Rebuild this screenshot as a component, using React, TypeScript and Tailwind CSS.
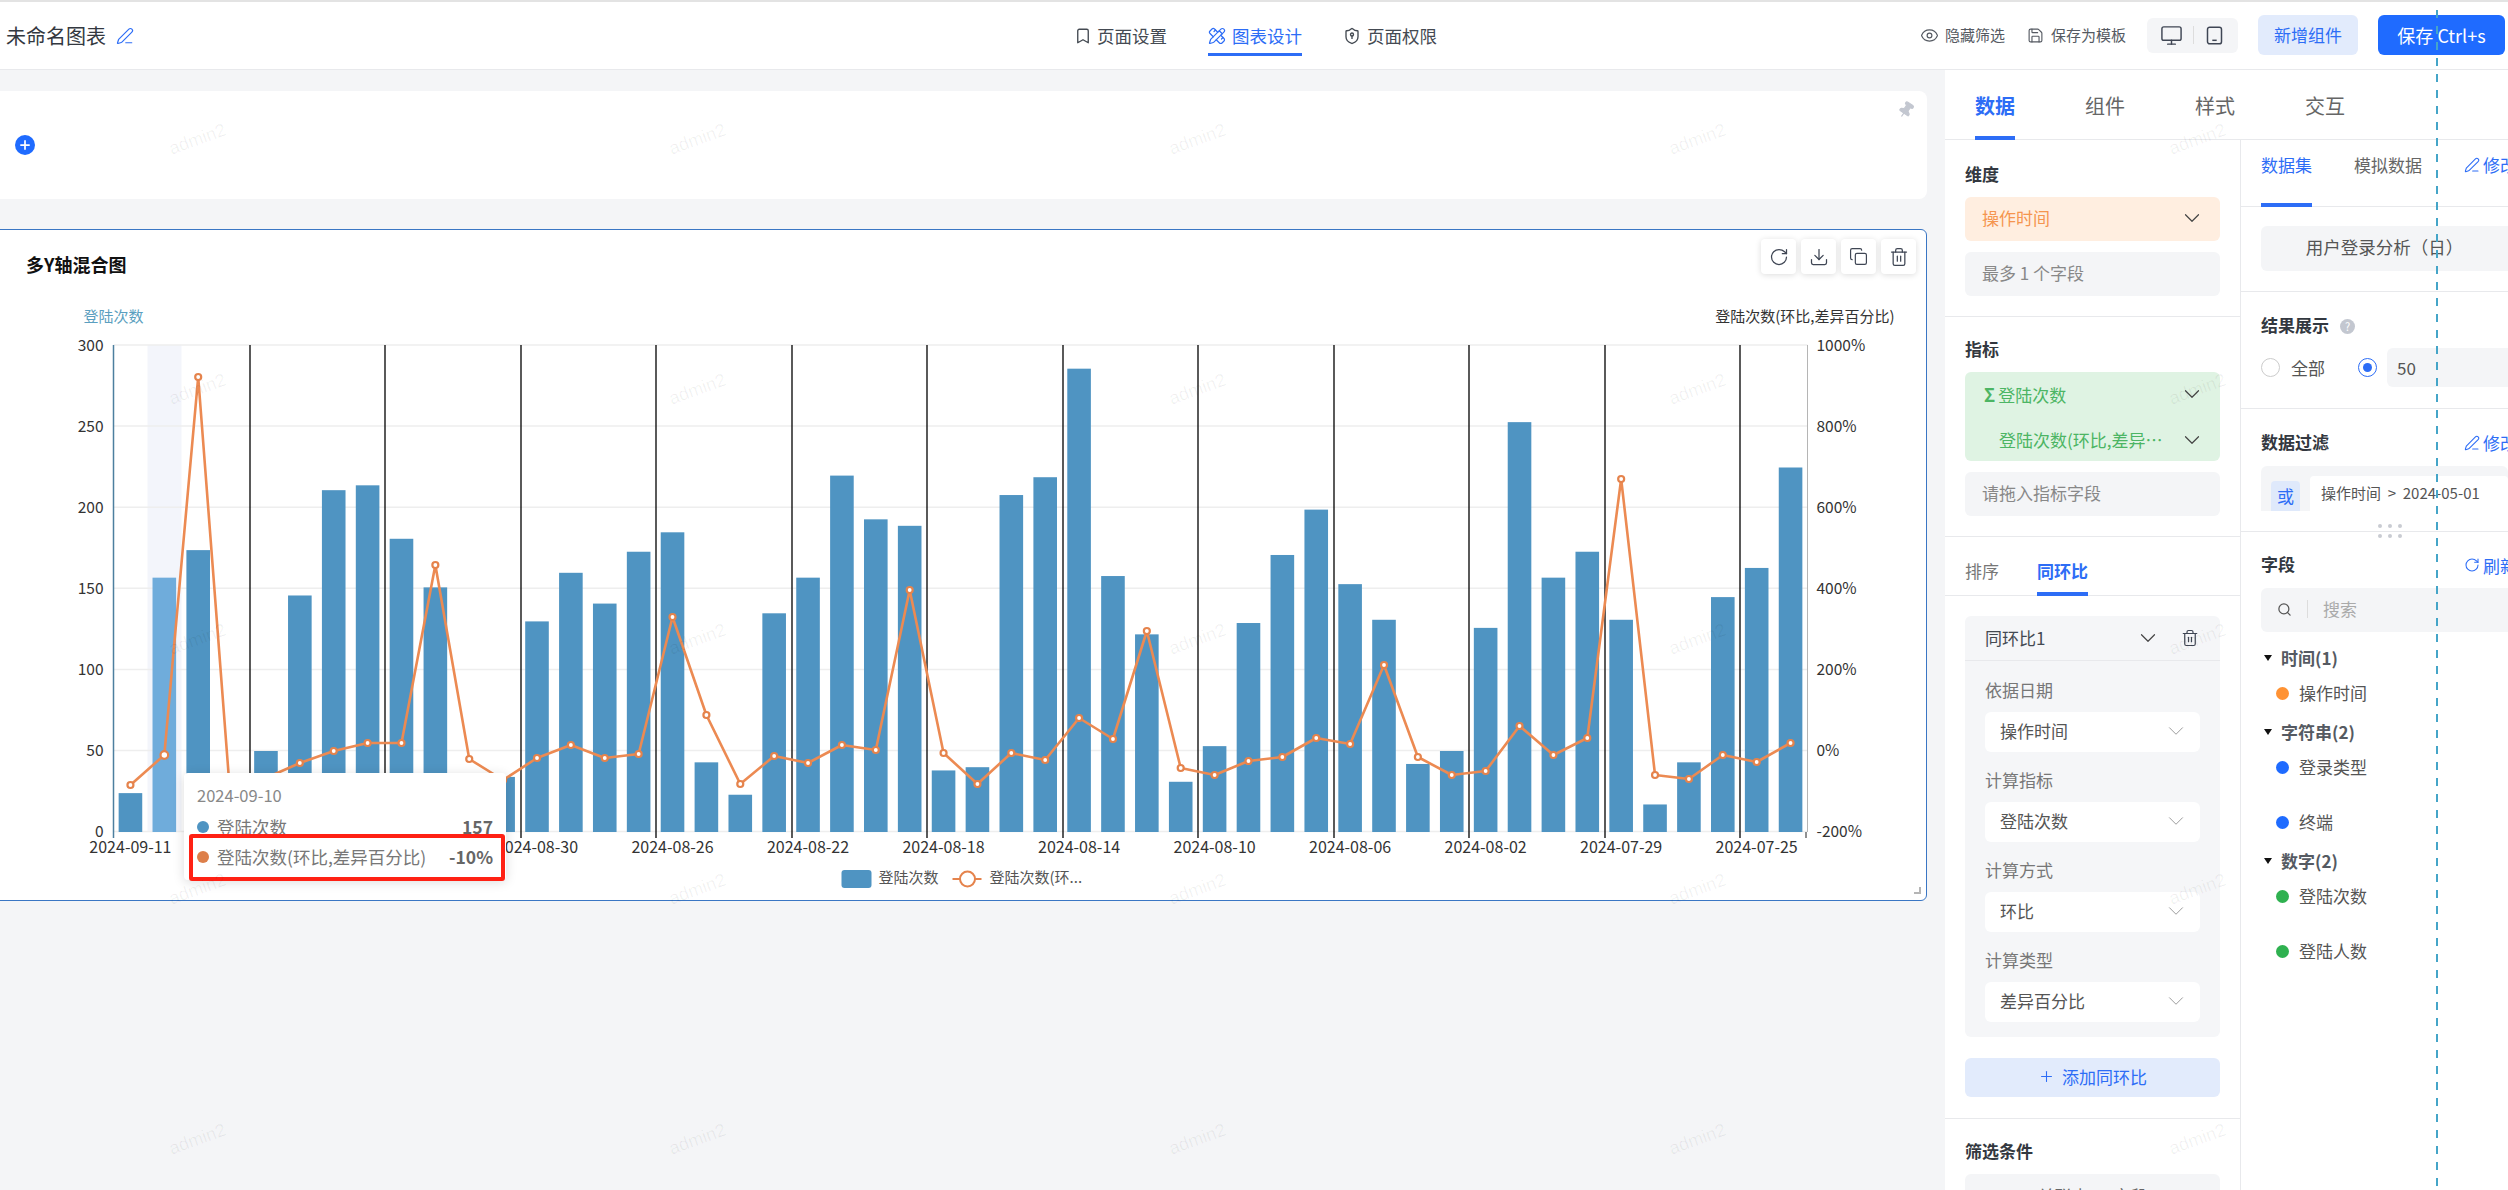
import {
  ChevronDown,
  Copy,
  Download,
  Eye,
  Monitor,
  PencilRuler,
  PenLine,
  Pin,
  Plus,
  RotateCw,
  Save,
  Search,
  Bookmark,
  Trash2,
} from "lucide-react";
import type { ReactNode } from "react";

const BARS = [
  24, 157, 174, 20, 50, 146, 211, 214, 181, 151, 30, 34, 130, 160, 141, 173, 185, 43, 23, 135, 157, 220, 193, 189, 38,
  40, 208, 219, 286, 158, 122, 31, 53, 129, 171, 199, 153, 131, 42, 50, 126, 253, 157, 173, 131, 17, 43, 145, 163, 225,
];
// y of each point of the line, page pixels
const LINE = [
  785, 755, 377, 820, 778, 763, 751, 743, 743, 565, 759, 780, 758, 745, 758, 754, 617, 715, 784, 756, 763, 745, 750,
  590, 753, 784, 753, 760, 718, 739, 631, 768, 775, 761, 757, 738, 744, 665, 757, 775, 771, 726, 755, 738, 479, 775,
  779, 755, 762, 743,
];
// the tooltip hides the two labels after the first one
const DATES = [
  { i: 0, d: "2024-09-11" },
  { i: 12, d: "2024-08-30" },
  { i: 16, d: "2024-08-26" },
  { i: 20, d: "2024-08-22" },
  { i: 24, d: "2024-08-18" },
  { i: 28, d: "2024-08-14" },
  { i: 32, d: "2024-08-10" },
  { i: 36, d: "2024-08-06" },
  { i: 40, d: "2024-08-02" },
  { i: 44, d: "2024-07-29" },
  { i: 48, d: "2024-07-25" },
];
const LEFT_X = 114;
const RIGHT_X = 1808;
const PITCH = (RIGHT_X - LEFT_X) / 50;
const TOP_Y = 345;
const BASE_Y = 832;
const cx = (i: number) => LEFT_X + PITCH * (i + 0.5);

function Chart() {
  const grid = [0, 1, 2, 3, 4, 5, 6];
  const ticks = [1, 2, 3, 4, 5, 6, 7, 8, 9, 10, 11, 12];
  return (
    <svg width={1933} height={600} viewBox="-6.5 300 1933 600" className="block">
      <rect x={148} y={TOP_Y} width={34} height={BASE_Y - TOP_Y} fill="#f3f5fb" />
      {grid.map((g) => (
        <line
          key={g}
          x1={LEFT_X}
          x2={RIGHT_X}
          y1={TOP_Y + g * 81.1}
          y2={TOP_Y + g * 81.1}
          stroke="#eeeeee"
          strokeWidth={1.5}
        />
      ))}
      {ticks.map((t) => (
        <line
          key={t}
          x1={Math.round(LEFT_X + PITCH * 4 * t) + 0.5}
          x2={Math.round(LEFT_X + PITCH * 4 * t) + 0.5}
          y1={TOP_Y}
          y2={BASE_Y + 6}
          stroke="#000000"
          strokeWidth={1.3}
        />
      ))}
      <line x1={LEFT_X} x2={LEFT_X} y1={TOP_Y} y2={BASE_Y + 6} stroke="#4d7f9f" strokeWidth={1.5} />
      <line x1={RIGHT_X} x2={RIGHT_X} y1={TOP_Y} y2={BASE_Y} stroke="#b5b5b5" />
      <line x1={1806.5} x2={1806.5} y1={BASE_Y} y2={BASE_Y + 6} stroke="#222222" />
      {BARS.map((v, i) => (
        <rect
          key={i}
          x={cx(i) - 11.8}
          y={BASE_Y - v * 1.62}
          width={23.6}
          height={v * 1.62}
          fill={i === 1 ? "#6facdb" : "#4f94c2"}
        />
      ))}
      <polyline
        points={LINE.map((y, i) => `${cx(i)},${y}`).join(" ")}
        fill="none"
        stroke="#ec8a52"
        strokeWidth={2.6}
        strokeLinejoin="round"
      />
      {LINE.map((y, i) => (
        <circle key={i} cx={cx(i)} cy={y} r={i === 1 ? 3.8 : 3} fill="#ffffff" stroke="#e5834c" strokeWidth={2.2} />
      ))}
      <g fontSize={15.5} fill="#333333">
        {["300", "250", "200", "150", "100", "50", "0"].map((t, i) => (
          <text key={t} x={104} y={TOP_Y + i * 81.1 + 5.5} textAnchor="end">
            {t}
          </text>
        ))}
        {["1000%", "800%", "600%", "400%", "200%", "0%", "-200%"].map((t, i) => (
          <text key={t} x={1817} y={TOP_Y + i * 81.1 + 5.5}>
            {t}
          </text>
        ))}
        {DATES.map(({ i, d }) => (
          <text key={d} x={cx(i)} y={853} textAnchor="middle" fontSize={16}>
            {d}
          </text>
        ))}
        <text x={84} y={322} fontSize={15} fill="#5b9fc0">
          登陆次数
        </text>
        <text x={1895} y={322} fontSize={15} textAnchor="end">
          登陆次数(环比,差异百分比)
        </text>
        <rect x={842} y={870} width={30} height={18} rx={3} fill="#4f94c2" />
        <text x={879} y={883} fontSize={15} fill="#555555">
          登陆次数
        </text>
        <line x1={953} x2={982} y1={879} y2={879} stroke="#e5834c" strokeWidth={2} />
        <circle cx={968} cy={879} r={7.5} fill="#ffffff" stroke="#e5834c" strokeWidth={2} />
        <text x={990} y={883} fontSize={15} fill="#555555">
          登陆次数(环...
        </text>
      </g>
    </svg>
  );
}

function Tooltip() {
  return (
    <div className="absolute left-[191px] top-[543px] h-[107px] w-[322px] rounded bg-white px-[13px] pt-[10px] shadow-[0_2px_12px_rgba(0,0,0,0.14)]">
      <div className="text-[16.5px] leading-[24px] text-[#888888]">2024-09-10</div>
      <div className="mt-[8px] flex h-[24px] items-center text-[17.5px] text-[#777777]">
        <span className="mr-[8px] size-[12px] rounded-full bg-[#4f94c2]" />
        登陆次数
        <span className="ml-auto font-bold text-[#666666]">157</span>
      </div>
      <div className="mt-[6px] flex h-[24px] items-center text-[17.5px] text-[#777777]">
        <span className="mr-[8px] size-[12px] rounded-full bg-[#dd7f4a]" />
        登陆次数(环比,差异百分比)
        <span className="ml-auto font-bold text-[#666666]">-10%</span>
      </div>
      <div className="absolute left-[5px] top-[61px] h-[47px] w-[316px] rounded-[3px] border-[4.5px] border-[#ff2114]" />
    </div>
  );
}

function ToolButton({ children }: { children: ReactNode }) {
  return (
    <div className="flex h-[35px] w-[35px] items-center justify-center rounded bg-white text-[#3f4654] shadow-[0_1px_6px_rgba(0,0,0,0.14)]">
      {children}
    </div>
  );
}

function SectionTitle({ children }: { children: ReactNode }) {
  return <div className="h-[24px] text-[17px] font-bold leading-[22px] text-[#333840]">{children}</div>;
}

function Field({ children }: { children: ReactNode }) {
  return (
    <div className="mt-[11px] flex h-[44px] items-center rounded-md bg-[#f4f5f7] px-[17px] pb-[2px] text-[17px] text-[#888888]">
      {children}
    </div>
  );
}

function SelectRow({ label, value, first }: { label: string; value: string; first?: boolean }) {
  return (
    <>
      <div className={`${first ? "mt-[18px]" : "mt-[17px]"} h-[24px] text-[17px] leading-[22px] text-[#777777]`}>{label}</div>
      <div className="mt-[9px] flex h-[40px] items-center justify-between rounded-md bg-white pb-[2px] pl-[15px] pr-[11px] text-[17px] text-[#555555]">
        {value}
        <ChevronDown size={26} strokeWidth={0.9} className="text-[#999999]" />
      </div>
    </>
  );
}

function TreeGroup({ label }: { label: string }) {
  return (
    <div className="mt-[15px] flex h-[24px] items-center pb-[2px] text-[17px] font-bold text-[#555a62]">
      <svg width="8" height="6" viewBox="0 0 8 6" className="ml-[3px] mr-[9px]">
        <path d="M0 0h8L4 6z" fill="#111111" />
      </svg>
      {label}
    </div>
  );
}

function TreeItem({ label, dot, far }: { label: string; dot: string; far?: boolean }) {
  return (
    <div className={`${far ? "mt-[31px]" : "mt-[11px]"} flex h-[24px] items-center pb-[2px] pl-[15px] text-[17px] text-[#555555]`}>
      <span className={`mr-[10px] size-[13px] rounded-full ${dot}`} />
      {label}
    </div>
  );
}

function EditLink({ label, Icon }: { label: string; Icon: typeof PenLine }) {
  return (
    <div className="flex w-[44px] shrink-0 items-center whitespace-nowrap text-[17px] text-[#2d6df6]">
      <Icon size={16} strokeWidth={1.6} className="mr-[3px] shrink-0" />
      {label}
    </div>
  );
}

function Watermarks() {
  const cells = Array.from({ length: 25 }, (_, i) => i);
  return (
    <div className="pointer-events-none absolute left-[-52px] top-[14px] grid auto-rows-[250px] grid-cols-[repeat(5,500px)] place-items-center">
      {cells.map((i) => (
        <span key={i} className="-rotate-20 font-['Liberation_Sans',sans-serif] text-[18px] text-[rgba(0,0,0,0.06)]">
          admin2
        </span>
      ))}
    </div>
  );
}

export default function App() {
  return (
    <div className="relative h-[1190px] w-[2508px] overflow-hidden bg-[#f4f5f7] font-['Noto_Sans_CJK_SC','Liberation_Sans',sans-serif]">
      {/* Top bar */}
      <header className="flex h-[70px] border-b border-t-2 border-b-[#e8e9ec] border-t-[#e3e3e3] bg-white">
        <div className="flex w-[1074px] items-center pl-[6px] text-[20px] text-[#333840]">
          未命名图表
          <PenLine size={18} strokeWidth={1.6} className="ml-[10px] text-[#2d6df6]" />
        </div>
        <nav className="mt-[17px] flex h-[37px] gap-[41px] text-[17.5px] text-[#444a52]">
          <div className="flex items-center border-b-[3px] border-transparent">
            <Bookmark size={18} strokeWidth={1.8} className="mr-[5px]" />
            页面设置
          </div>
          <div className="flex items-center border-b-[3px] border-[#2d6df6] text-[#2d6df6]">
            <PencilRuler size={18} strokeWidth={1.6} className="mr-[6px]" />
            图表设计
          </div>
          <div className="flex items-center border-b-[3px] border-transparent">
            <svg width="18" height="18" viewBox="0 0 24 24" fill="none" stroke="currentColor" strokeWidth="1.8" className="mr-[6px]">
              <path d="M20 13c0 5-3.5 7.5-7.66 8.95a1 1 0 0 1-.67-.01C7.5 20.5 4 18 4 13V6a1 1 0 0 1 1-1c2 0 4.5-1.2 6.24-2.72a1.17 1.17 0 0 1 1.52 0C14.51 3.81 17 5 19 5a1 1 0 0 1 1 1z" />
              <circle cx="12" cy="10" r="2" />
              <path d="M12 12v4" />
            </svg>
            页面权限
          </div>
        </nav>
        <div className="ml-auto flex items-center pb-[1px] pr-[3px] text-[15px] text-[#555a62]">
          <Eye size={19} strokeWidth={1.5} className="mr-[6px]" />
          隐藏筛选
          <Save size={17} strokeWidth={1.6} className="ml-[22px] mr-[7px]" />
          保存为模板
          <div className="ml-[21px] flex h-[35px] w-[91px] items-center justify-center rounded-md bg-[#f4f5f7] text-[#3f4654]">
            <Monitor size={23} strokeWidth={1.5} />
            <span className="mx-[10px] h-[18px] w-px bg-[#dddddd]" />
            <svg width="21" height="21" viewBox="0 0 24 24" fill="none" stroke="currentColor" strokeWidth="1.7">
              <rect x="4" y="2.5" width="16" height="19" rx="2.5" />
              <path d="M9.5 17.5h5" />
            </svg>
          </div>
          <button className="ml-[20px] h-[40px] w-[100px] rounded-md bg-[#e2ebfc] text-[17px] text-[#2d6df6]">新增组件</button>
          <button className="ml-[20px] h-[40px] w-[127px] rounded-md bg-[#1f6bff] text-[18px] text-white">保存 Ctrl+s</button>
        </div>
      </header>

      <div className="flex h-[1120px]">
        {/* Canvas */}
        <main className="w-[1945px] pr-[18px] pt-[21px]">
          <div className="relative -ml-2 flex h-[108px] items-center rounded-lg bg-white pl-[23px]">
            <span className="flex size-[20px] items-center justify-center rounded-full bg-[#1f6bff] text-white">
              <Plus size={14} strokeWidth={3} />
            </span>
            <Pin size={18} fill="#c3c7d0" strokeWidth={1.5} className="absolute right-[12px] top-[10px] rotate-[35deg] text-[#c3c7d0]" />
          </div>
          <div className="relative -ml-2 mt-[30px] h-[672px] rounded-md border-[1.5px] border-[#3a76c4] bg-white">
            <div className="h-[70px] pl-[33px] pt-[22px] text-[18px] font-bold leading-[24px] text-[#111111]">多Y轴混合图</div>
            <Chart />
            <div className="absolute right-[10px] top-[9px] flex gap-[5px]">
              <ToolButton>
                <RotateCw size={20} strokeWidth={1.5} />
              </ToolButton>
              <ToolButton>
                <Download size={20} strokeWidth={1.5} />
              </ToolButton>
              <ToolButton>
                <Copy size={19} strokeWidth={1.5} />
              </ToolButton>
              <ToolButton>
                <Trash2 size={20} strokeWidth={1.5} />
              </ToolButton>
            </div>
            <Tooltip />
            <span className="absolute bottom-[6px] right-[5px] size-[7px] border-b-2 border-r-2 border-[#b5b5b5]" />
          </div>
        </main>

        {/* Side panel */}
        <aside className="flex w-[563px] flex-col overflow-hidden bg-white">
          <div className="flex h-[70px] shrink-0 gap-[70px] border-b border-[#e8e9ec] pl-[30px] text-[20px] text-[#666666]">
            <div className="mt-[13px] h-[57px] border-b-4 border-[#2d6df6] pt-[8px] font-bold text-[#2d6df6]">数据</div>
            <div className="mt-[21px]">组件</div>
            <div className="mt-[21px]">样式</div>
            <div className="mt-[21px]">交互</div>
          </div>
          <div className="flex flex-1">
            {/* Field wells */}
            <div className="w-[296px] shrink-0 border-r border-[#e8e9ec]">
              <section className="border-b border-[#e8e9ec] px-[20px] pb-[20px] pt-[23px]">
                <SectionTitle>维度</SectionTitle>
                <div className="mt-[10px] flex h-[44px] items-center justify-between rounded-md bg-[#ffeee0] pb-[2px] pl-[17px] pr-[15px] text-[17px] text-[#f5954f]">
                  操作时间
                  <ChevronDown size={26} strokeWidth={1.1} className="text-[#444444]" />
                </div>
                <Field>最多 1 个字段</Field>
              </section>
              <section className="border-b border-[#e8e9ec] px-[20px] pb-[20px] pt-[21px]">
                <SectionTitle>指标</SectionTitle>
                <div className="mt-[10px] h-[89px] rounded-md bg-[#dff3e3] pl-[19px] pr-[15px] pt-[10px] text-[17px] leading-[24px] text-[#4cb564]">
                  <div className="flex h-[24px] items-center justify-between">
                    <span>
                      <b className="mr-[3px] text-[18px]">Σ</b>登陆次数
                    </span>
                    <ChevronDown size={26} strokeWidth={1.1} className="text-[#444444]" />
                  </div>
                  <div className="mt-[22px] flex h-[24px] items-center justify-between pl-[15px]">
                    <span>登陆次数(环比,差异…</span>
                    <ChevronDown size={26} strokeWidth={1.1} className="text-[#444444]" />
                  </div>
                </div>
                <Field>请拖入指标字段</Field>
              </section>
              <div className="flex h-[59px] gap-[38px] border-b border-[#e8e9ec] pl-[20px] text-[17px]">
                <div className="mt-[21px] text-[#777777]">排序</div>
                <div className="mt-[21px] h-[38px] border-b-4 border-[#2d6df6] font-bold text-[#2d6df6]">同环比</div>
              </div>
              <section className="border-b border-[#e8e9ec] px-[20px] pb-[21px] pt-[20px]">
                <div className="rounded-md bg-[#f5f6f8] pb-[15px]">
                  <div className="flex h-[45px] items-center border-b border-[#e8e9ec] pl-[20px] pr-[21px] text-[17px] text-[#444a52]">
                    同环比1
                    <ChevronDown size={26} strokeWidth={1.1} className="ml-auto text-[#444444]" />
                    <Trash2 size={18} strokeWidth={1.6} className="ml-[20px] text-[#3f4654]" />
                  </div>
                  <div className="px-[20px]">
                    <SelectRow first label="依据日期" value="操作时间" />
                    <SelectRow label="计算指标" value="登陆次数" />
                    <SelectRow label="计算方式" value="环比" />
                    <SelectRow label="计算类型" value="差异百分比" />
                  </div>
                </div>
                <button className="mt-[21px] flex h-[39px] w-full items-center justify-center rounded-md bg-[#e2ebfc] pb-[2px] text-[17px] text-[#2d6df6]">
                  <Plus size={17} strokeWidth={1.5} className="mr-[7px]" />
                  添加同环比
                </button>
              </section>
              <section className="px-[20px] pt-[21px]">
                <SectionTitle>筛选条件</SectionTitle>
                <div className="mt-[10px] flex h-[44px] items-center justify-center rounded-md bg-[#f4f5f7] text-[17px] text-[#666666]">
                  关联表 · 字段
                </div>
              </section>
            </div>

            {/* Dataset */}
            <div className="min-w-0 flex-1">
              <div className="flex h-[67px] whitespace-nowrap border-b border-[#e8e9ec] pl-[20px] text-[17px] text-[#666666]">
                <div className="mt-[12px] h-[55px] border-b-4 border-[#2d6df6] text-[#2d6df6]">数据集</div>
                <div className="ml-[42px] mt-[12px]">模拟数据</div>
                <div className="ml-auto mt-[12px] h-[24px]">
                  <EditLink label="修改" Icon={PenLine} />
                </div>
              </div>
              <section className="border-b border-[#e8e9ec] pb-[20px] pl-[20px] pt-[19px]">
                <div className="flex h-[45px] items-center justify-center rounded-l-md bg-[#f4f5f7] pb-[2px] text-[17.5px] text-[#555555]">
                  用户登录分析（日）
                </div>
              </section>
              <section className="border-b border-[#e8e9ec] pb-[21px] pl-[20px] pt-[22px]">
                <div className="flex items-center">
                  <SectionTitle>结果展示</SectionTitle>
                  <span className="ml-[11px] flex size-[15px] items-center justify-center rounded-full bg-[#c3c7d0] text-[11px] text-white">?</span>
                </div>
                <div className="mt-[10px] flex h-[39px] items-center text-[17px] text-[#555555]">
                  <span className="size-[19px] rounded-full border border-[#cccccc]" />
                  <span className="ml-[11px]">全部</span>
                  <span className="ml-[33px] flex size-[19px] items-center justify-center rounded-full border-[1.5px] border-[#2d6df6]">
                    <span className="size-[9px] rounded-full bg-[#2d6df6]" />
                  </span>
                  <div className="ml-[10px] flex h-[39px] flex-1 items-center rounded-l-md bg-[#f4f5f7] pl-[10px]">50</div>
                </div>
              </section>
              <section className="relative border-b border-[#e8e9ec] pb-[20px] pl-[20px] pt-[21px]">
                <div className="flex items-center justify-between">
                  <SectionTitle>数据过滤</SectionTitle>
                  <EditLink label="修改" Icon={PenLine} />
                </div>
                <div className="mt-[10px] flex h-[45px] items-end rounded-t-md bg-[#f4f5f7] pl-[10px]">
                  <span className="flex h-[30px] w-[29px] items-center justify-center rounded-t bg-[#dfe9fb] text-[17px] text-[#2d6df6]">或</span>
                  <div className="ml-[10px] flex h-[35px] flex-1 items-center whitespace-nowrap rounded-t bg-white pl-[11px] text-[15px] text-[#555555]">
                    操作时间 &nbsp;&gt;&nbsp; 2024-05-01
                  </div>
                </div>
                <div className="absolute bottom-[-7px] left-[137px] grid grid-cols-3 gap-x-[6px] gap-y-[6px]">
                  {[0, 1, 2, 3, 4, 5].map((d) => (
                    <span key={d} className="size-[4px] rounded-full bg-[#c9ccd2]" />
                  ))}
                </div>
              </section>
              <section className="pl-[20px] pt-[21px]">
                <div className="flex items-center justify-between">
                  <SectionTitle>字段</SectionTitle>
                  <EditLink label="刷新" Icon={RotateCw} />
                </div>
                <div className="mt-[10px] flex h-[44px] items-center rounded-l-md bg-[#f4f5f7] pb-[2px] pl-[16px] text-[17px] text-[#aaaaaa]">
                  <Search size={15} strokeWidth={2} className="text-[#555555]" />
                  <span className="mx-[15px] h-[18px] w-px bg-[#dddddd]" />
                  搜索
                </div>
                <TreeGroup label="时间(1)" />
                <TreeItem label="操作时间" dot="bg-[#ff9233]" />
                <TreeGroup label="字符串(2)" />
                <TreeItem label="登录类型" dot="bg-[#1f6bff]" />
                <TreeItem label="终端" dot="bg-[#1f6bff]" far />
                <TreeGroup label="数字(2)" />
                <TreeItem label="登陆次数" dot="bg-[#2fb150]" />
                <TreeItem label="登陆人数" dot="bg-[#2fb150]" far />
              </section>
            </div>
          </div>
        </aside>
      </div>

      <Watermarks />
      {/* guide line dragged over the page */}
      <div className="pointer-events-none absolute bottom-0 left-[2436px] top-[10px] w-[1.5px] bg-[repeating-linear-gradient(to_bottom,#45a5c8_0,#45a5c8_8px,transparent_8px,transparent_16px)]" />
    </div>
  );
}
